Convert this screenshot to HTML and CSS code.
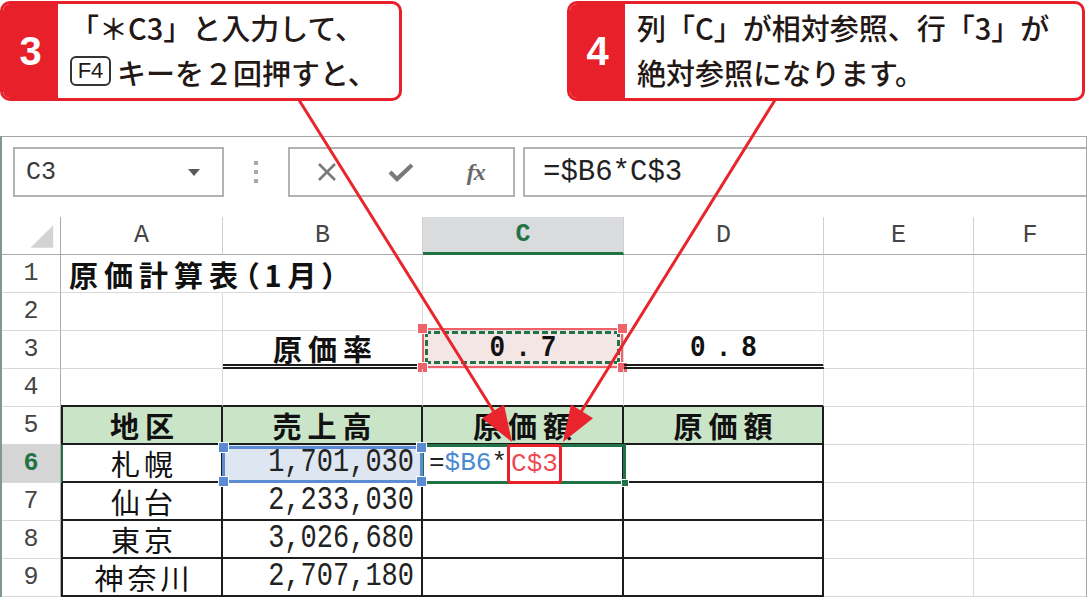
FILE: index.html
```html
<!DOCTYPE html>
<html lang="ja">
<head>
<meta charset="utf-8">
<title>Excel 絶対参照</title>
<link rel="stylesheet" href="styles.css">
</head>
<body>
<div class="callouts">
  <div class="callout c1">
    <div class="badge">3</div>
    <div class="ctext">
      <div>「＊C3」と入力して、</div>
      <div><span class="key">F4</span>キーを２回押すと、</div>
    </div>
  </div>
  <div class="callout c2">
    <div class="badge">4</div>
    <div class="ctext">
      <div>列「C」が相対参照、行「3」が</div>
      <div>絶対参照になります。</div>
    </div>
  </div>
</div>

<div class="excel">
  <div class="fbar">
    <div class="namebox">
      <span>C3</span>
      <svg width="12" height="7" viewBox="0 0 12 7"><polygon points="0,0 12,0 6,7" fill="#5a5a5a"/></svg>
    </div>
    <div class="dots">
      <svg width="4" height="22" viewBox="0 0 4 22"><rect x="0" y="0" width="4" height="4" fill="#a8a8a8"/><rect x="0" y="9" width="4" height="4" fill="#a8a8a8"/><rect x="0" y="18" width="4" height="4" fill="#a8a8a8"/></svg>
    </div>
    <div class="btns">
      <div class="btn"><svg width="20" height="20" viewBox="0 0 20 20"><path d="M2 2 L18 18 M18 2 L2 18" stroke="#7a7a7a" stroke-width="2.6" fill="none"/></svg></div>
      <div class="btn"><svg width="26" height="20" viewBox="0 0 26 20"><path d="M2 10 L9 17 L24 3" stroke="#7a7a7a" stroke-width="4.2" fill="none"/></svg></div>
      <div class="btn fx">fx</div>
    </div>
    <div class="formula">=$B6*C$3</div>
  </div>

  <div class="grid">
    <!-- header row -->
    <div class="c corner"><svg width="59" height="38" viewBox="0 0 59 38"><polygon points="52,8 52,31 29,31" fill="#d3d3d3"/></svg></div>
    <div class="c ch">A</div>
    <div class="c ch">B</div>
    <div class="c ch sel">C</div>
    <div class="c ch">D</div>
    <div class="c ch">E</div>
    <div class="c ch">F</div>

    <!-- row 1 -->
    <div class="c rh">1</div>
    <div class="c jp b a1"><span class="sp">原価計算表（1月）</span></div>
    <div class="c"></div><div class="c"></div><div class="c"></div><div class="c"></div><div class="c"></div>

    <!-- row 2 -->
    <div class="c rh">2</div>
    <div class="c"></div><div class="c"></div><div class="c"></div><div class="c"></div><div class="c"></div><div class="c"></div>

    <!-- row 3 -->
    <div class="c rh">3</div>
    <div class="c"></div>
    <div class="c dbl ctr jp b"><span class="sp">原価率</span></div>
    <div class="c c3 ctr">
      <span class="rate">0.7</span>
      <div class="mq">
        <div class="ants"></div>
        <i class="h rh1"></i><i class="h rh2"></i><i class="h rh3"></i><i class="h rh4"></i>
      </div>
    </div>
    <div class="c dbl ctr"><span class="rate">0.8</span></div>
    <div class="c"></div><div class="c"></div>

    <!-- row 4 -->
    <div class="c rh">4</div>
    <div class="c tb"></div><div class="c tb"></div><div class="c tb"></div><div class="c tb"></div>
    <div class="c"></div><div class="c"></div>

    <!-- row 5 -->
    <div class="c rh">5</div>
    <div class="c tl tr tb green ctr jp b"><span class="sp">地区</span></div>
    <div class="c tr tb green ctr jp b"><span class="sp">売上高</span></div>
    <div class="c tr tb green ctr jp b"><span class="sp">原価額</span></div>
    <div class="c tr tb green ctr jp b"><span class="sp">原価額</span></div>
    <div class="c"></div><div class="c"></div>

    <!-- row 6 -->
    <div class="c rh sel">6</div>
    <div class="c tl a6 tr tb ctr jp"><span class="sp2">札幌</span></div>
    <div class="c tr tb rt num b6">
      <span class="tall">1,701,030</span>
      <div class="bsel"><i class="bh bh1"></i><i class="bh bh2"></i><i class="bh bh3"></i><i class="bh bh4"></i></div>
    </div>
    <div class="c tr tb c6">
      <span class="fml"><span class="k">=</span><span class="blue">$B6</span><span class="k">*</span><span class="redref">C$3</span></span>
      <div class="act"><i class="fill"></i></div>
    </div>
    <div class="c tr tb"></div>
    <div class="c"></div><div class="c"></div>

    <!-- row 7 -->
    <div class="c rh">7</div>
    <div class="c tl tr tb ctr jp"><span class="sp2">仙台</span></div>
    <div class="c tr tb rt num"><span class="tall">2,233,030</span></div>
    <div class="c tr tb"></div>
    <div class="c tr tb"></div>
    <div class="c"></div><div class="c"></div>

    <!-- row 8 -->
    <div class="c rh">8</div>
    <div class="c tl tr tb ctr jp"><span class="sp2">東京</span></div>
    <div class="c tr tb rt num"><span class="tall">3,026,680</span></div>
    <div class="c tr tb"></div>
    <div class="c tr tb"></div>
    <div class="c"></div><div class="c"></div>

    <!-- row 9 -->
    <div class="c rh">9</div>
    <div class="c tl tr tb ctr jp"><span class="sp2">神奈川</span></div>
    <div class="c tr tb rt num"><span class="tall">2,707,180</span></div>
    <div class="c tr tb"></div>
    <div class="c tr tb"></div>
    <div class="c"></div><div class="c"></div>
  </div>
</div>

<svg class="arrows" width="1087" height="597" viewBox="0 0 1087 597">
  <line x1="299" y1="100" x2="494" y2="412" stroke="#e8242c" stroke-width="3"/>
  <polygon points="512,442 482,418.3 504,404.5" fill="#e8242c"/>
  <line x1="775" y1="100" x2="581" y2="412" stroke="#e8242c" stroke-width="3"/>
  <polygon points="563,442 593,418.2 571,404.6" fill="#e8242c"/>
</svg>
</body>
</html>
```

FILE: styles.css
```css
* { box-sizing: border-box; }
html, body { margin: 0; padding: 0; }
body {
  width: 1087px;
  height: 597px;
  overflow: hidden;
  background: #fff;
  position: relative;
  font-family: "Noto Sans CJK JP", "Noto Sans", sans-serif;
}

/* ---------- callouts ---------- */
.callouts {
  display: flex;
  align-items: flex-start;
  height: 136px;
  padding-top: 1px;
}
.callout {
  display: flex;
  height: 100px;
  border: 3px solid #e8202a;
  border-radius: 10px;
  overflow: hidden;
  background: #fff;
}
.c1 { width: 402px; }
.c2 { width: 518px; margin-left: 165px; }
.badge {
  width: 55px;
  flex: none;
  background: #e8202a;
  color: #fff;
  font: 700 40px "Liberation Sans", Arial, sans-serif;
  display: flex;
  align-items: center;
  justify-content: center;
}
.ctext {
  padding: 1px 0 0 12px;
  font-size: 29px;
  line-height: 45px;
  font-weight: 500;
  color: #231815;
  white-space: nowrap;
}
.key {
  display: inline-flex;
  align-items: center;
  justify-content: center;
  width: 41px;
  height: 30px;
  margin: 6px 6px 0 0;
  vertical-align: top;
  border: 2px solid #333;
  border-radius: 6px;
  font: 400 22px/1 "Liberation Sans", Arial, sans-serif;
  color: #231815;
}

/* ---------- excel window ---------- */
.excel {
  height: 461px;
  border-top: 1px solid #a6a6a6;
  border-left: 2px solid #7f9a8c;
  border-right: 1px solid #a6a6a6;
}
.fbar {
  display: flex;
  align-items: flex-start;
  height: 80px;
  padding: 10px 0 0 11px;
}
.namebox {
  width: 211px;
  height: 50px;
  border: 2px solid #b3b3b3;
  display: flex;
  align-items: center;
  justify-content: space-between;
  padding: 0 22px 0 11px;
  font: 25px "Liberation Mono", monospace;
  color: #3a3a3a;
}
.dots {
  width: 64px;
  height: 50px;
  display: flex;
  align-items: center;
  justify-content: center;
}
.btns {
  width: 227px;
  height: 50px;
  border: 2px solid #b3b3b3;
  display: flex;
  align-items: center;
}
.btn {
  flex: 1;
  display: flex;
  align-items: center;
  justify-content: center;
}
.fx {
  font: italic 700 24px "Liberation Serif", serif;
  color: #6a6a6a;
  letter-spacing: -1px;
}
.formula {
  flex: 1;
  margin-left: 8px;
  height: 50px;
  border: 2px solid #b3b3b3;
  border-right: none;
  padding-left: 18px;
  display: flex;
  align-items: center;
  font: 29px "Liberation Mono", monospace;
  color: #222;
}

/* ---------- grid ---------- */
.grid {
  display: grid;
  grid-template-columns: 59px 162px 200px 201px 200px 150px 1fr;
  grid-template-rows: repeat(10, 38px);
}
.c {
  position: relative;
  display: flex;
  align-items: center;
  white-space: nowrap;
  min-width: 0;
  border-right: 1px solid #d9d9d9;
  border-bottom: 1px solid #d9d9d9;
}
.grid > .c:nth-child(7n) { border-right: none; }

.corner { border-right-color: #ababab; border-bottom-color: #ababab; }
.ch {
  justify-content: center;
  font: 25px "Liberation Mono", monospace;
  color: #454545;
  border-right-color: #d0d0d0;
  border-bottom-color: #ababab;
}
.ch.sel {
  background: #dadbdc;
  color: #217346;
  font-weight: 700;
  border-bottom: 3px solid #217346;
}
.rh {
  justify-content: center;
  font: 25px "Liberation Mono", monospace;
  color: #454545;
  border-right-color: #ababab;
  border-bottom-color: #d9d9d9;
}
.rh.sel {
  background: #d5d5d5;
  color: #217346;
  font-weight: 700;
}

.jp {
  font-family: "Noto Sans CJK JP", sans-serif;
  font-size: 29px;
  color: #111;
}
.b { font-weight: 700; }
.ctr { justify-content: center; }
.rt { justify-content: flex-end; padding-right: 7px; }
.sp { letter-spacing: 6px; margin-right: -6px; }
.sp2 { letter-spacing: 4px; margin-right: -4px; }

.a1 {
  padding-left: 8px;
  border-right-color: transparent;
  font-feature-settings: "palt";
  overflow: visible;
}

.num {
  font: 27px "Liberation Mono", monospace;
  color: #222;
}
.tall {
  display: inline-block;
  transform: scaleY(1.2);
}
.rate {
  display: inline-block;
  transform: scaleY(1.15);
  font: 700 26px "Liberation Mono", monospace;
  color: #111;
  letter-spacing: 10px;
  margin-right: -10px;
}

.tb { border-bottom: 2px solid #1c1c1c; }
.tr { border-right: 2px solid #1c1c1c; }
.tl { border-left: 2px solid #1c1c1c; }
.a6 { border-left-color: #217346; }
.dbl { border-bottom: 5px double #1c1c1c; }
.green { background: #c9e4c6; }

/* C3 copy marquee */
.c3 {
  background: #f5e6e6;
  border-bottom: 5px solid transparent;
}
.mq {
  position: absolute;
  left: -1px;
  right: 0;
  top: -3px;
  bottom: -4px;
  border: 2px solid #f0626a;
}
.ants {
  position: absolute;
  inset: 1px 1px 2px 1px;
  border: 3px dashed #217346;
}
.h {
  position: absolute;
  width: 11px;
  height: 11px;
  background: #f0626a;
  border: 1px solid #fff;
}
.rh1 { left: -7px; top: -7px; }
.rh2 { right: -7px; top: -7px; }
.rh3 { left: -7px; bottom: -7px; }
.rh4 { right: -7px; bottom: -7px; }

/* B6 reference selection */
.b6 { background: #dde6f1; }
.bsel {
  position: absolute;
  left: -1px;
  right: -2px;
  top: 1px;
  bottom: -2px;
  border: 3px solid #5b8bd3;
  z-index: 3;
}
.bh {
  position: absolute;
  width: 11px;
  height: 11px;
  background: #5b8bd3;
  border: 1px solid #fff;
}
.bh1 { left: -7px; top: -7px; }
.bh2 { right: -7px; top: -7px; }
.bh3 { left: -7px; bottom: -7px; }
.bh4 { right: -7px; bottom: -7px; }

/* C6 active cell */
.c6 { padding-left: 6px; }
.act {
  position: absolute;
  left: -2px;
  right: -4px;
  top: -1px;
  bottom: -3px;
  border: 3px solid #217346;
  z-index: 1;
}
.fill {
  position: absolute;
  right: -6px;
  bottom: -6px;
  width: 8px;
  height: 8px;
  background: #217346;
  border: 1px solid #fff;
}
.fml {
  position: relative;
  z-index: 2;
  display: flex;
  align-items: center;
  font: 26px "Liberation Mono", monospace;
}
.k { color: #222; }
.blue { color: #4a88d4; }
.redref {
  display: inline-flex;
  align-items: center;
  height: 40px;
  margin-top: 2px;
  padding: 0 1px;
  border: 3px solid #e8202a;
  border-radius: 4px;
  color: #ee4a55;
  background: #fff;
}

/* pointer arrows */
.arrows {
  position: absolute;
  left: 0;
  top: 0;
  z-index: 10;
  pointer-events: none;
}
```
